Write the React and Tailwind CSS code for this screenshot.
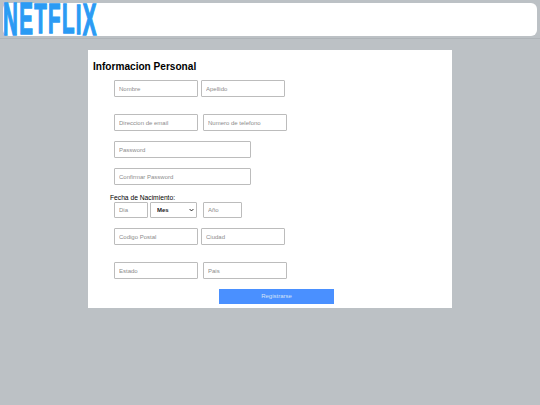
import React from 'react';

const field = "h-[17px] border border-[#bcbcbc] rounded-[1px] bg-white px-[4px] text-[6px] text-[#555] placeholder:text-[#8c8c8c] outline-none";

// letras del logo, cada una un poco mas corta hacia el centro
const LOGO = [
  { c: 'N', cls: 'scale-y-[1.01]' },
  { c: 'E', cls: 'scale-y-[0.98]' },
  { c: 'T', cls: 'scale-y-[0.95]' },
  { c: 'F', cls: 'scale-y-[0.935]' },
  { c: 'L', cls: 'scale-y-[0.95]' },
  { c: 'I', cls: 'scale-y-[0.965]' },
  { c: 'X', cls: 'scale-y-[0.99]' },
];

function Field({ placeholder, className }) {
  return <input placeholder={placeholder} className={`${field} ${className}`} />;
}

export default function App() {
  return (
    <div className="w-[540px] h-[405px] overflow-hidden bg-[#bcc1c5] font-['Liberation_Sans',Arial,sans-serif]">
      {/* cabecera */}
      <header className="h-[39px] pt-[3px] px-[3px] border-b border-[#afb4b8]">
        <div className="h-[33px] bg-white rounded-[6px]">
          <div className="flex gap-[3px] w-[205px] h-[33px] origin-top-left scale-x-[0.455] text-[45px] leading-[33px] font-bold text-[#2b9bf4] [-webkit-text-stroke:1.6px_#2b9bf4]">
            {LOGO.map((l) => (
              <span key={l.c} className={`block h-[33px] origin-top ${l.cls}`}>{l.c}</span>
            ))}
          </div>
        </div>
      </header>

      {/* formulario */}
      <main className="w-[364px] h-[258px] ml-[88px] mt-[11px] bg-white">
        <h1 className="pl-[5px] pt-[10px] h-[30px] text-[10.1px] leading-[13px] font-bold text-black">Informacion Personal</h1>

        <div className="pl-[26px] flex">
          <Field placeholder="Nombre" className="w-[84px]" />
          <Field placeholder="Apellido" className="w-[84px] ml-[3px]" />
        </div>

        <div className="pl-[26px] mt-[17px] flex">
          <Field placeholder="Direccion de email" className="w-[84px]" />
          <Field placeholder="Numero de telefono" className="w-[84px] ml-[5px]" />
        </div>

        <div className="pl-[26px] mt-[10px]">
          <Field placeholder="Password" className="w-[137px] block" />
          <Field placeholder="Confirmar Password" className="w-[137px] block mt-[10px]" />
        </div>

        <div className="pl-[22px] mt-[8px] text-[6.7px] leading-[9px] text-black">Fecha de Nacimiento:</div>

        <div className="pl-[26px] flex">
          <Field placeholder="Dia" className="w-[34px] !h-[16px]" />
          <div className="relative w-[47px] h-[16px] ml-[2px]">
            <select className="block appearance-none w-full h-full border border-[#bcbcbc] rounded-[1px] bg-white pl-[6px] text-[6px] font-semibold text-[#222] outline-none">
              <option>Mes</option>
            </select>
            <svg viewBox="0 0 8 5" className="absolute right-[3px] top-[6px] w-[5px] h-[4px] pointer-events-none">
              <path d="M1 1l3 3 3-3" fill="none" stroke="#222" strokeWidth="1.6" />
            </svg>
          </div>
          <Field placeholder="Año" className="w-[39px] !h-[16px] ml-[6px]" />
        </div>

        <div className="pl-[26px] mt-[10px] flex">
          <Field placeholder="Codigo Postal" className="w-[84px]" />
          <Field placeholder="Ciudad" className="w-[84px] ml-[3px]" />
        </div>

        <div className="pl-[26px] mt-[17px] flex">
          <Field placeholder="Estado" className="w-[84px]" />
          <Field placeholder="Pais" className="w-[84px] ml-[5px]" />
        </div>

        <div className="pl-[131px] mt-[10px] flex">
          <button className="w-[115px] h-[15px] bg-[#4a90ff] text-[6px] text-[#d5e3f7]">Registrarse</button>
        </div>
      </main>
    </div>
  );
}
